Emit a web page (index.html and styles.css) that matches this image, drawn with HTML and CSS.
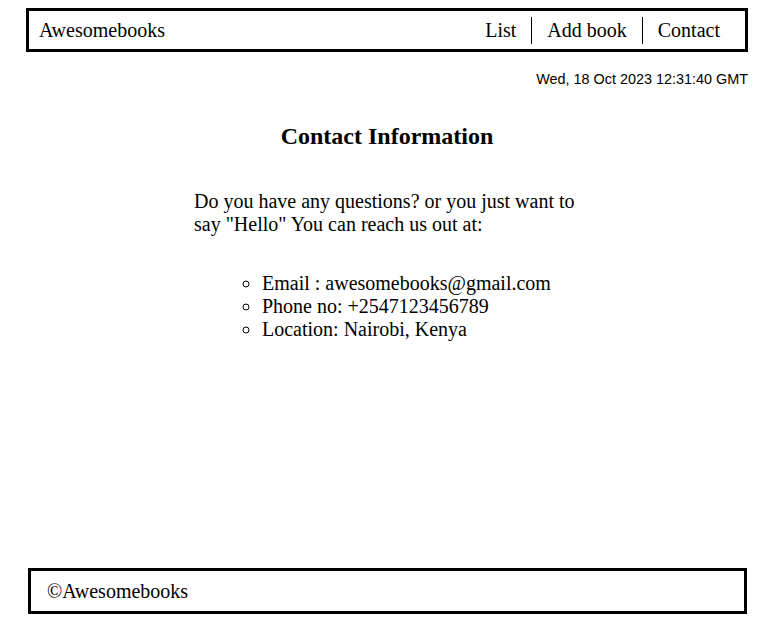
FILE: index.html
```html
<!DOCTYPE html>
<html lang="en">
<head>
<meta charset="utf-8">
<title>Awesomebooks</title>
<link rel="stylesheet" href="styles.css">
</head>
<body>
<div class="page">
  <header class="topbar">
    <span class="brand">Awesomebooks</span>
    <nav>
      <ul class="nav-list">
        <li class="nav-item">List</li>
        <li class="nav-item">Add book</li>
        <li class="nav-item">Contact</li>
      </ul>
    </nav>
  </header>
  <p class="date">Wed, 18 Oct 2023 12:31:40 GMT</p>
  <section class="contact">
    <h2 class="contact-title">Contact Information</h2>
    <div class="contact-body">
      <p class="contact-text">Do you have any questions? or you just want to say "Hello" You can reach us out at:</p>
      <ul class="contact-list">
        <li>Email : awesomebooks@gmail.com</li>
        <li>Phone no: +2547123456789</li>
        <li>Location: Nairobi, Kenya</li>
      </ul>
    </div>
  </section>
  <footer class="footer">©Awesomebooks</footer>
</div>
</body>
</html>
```

FILE: styles.css
```css
* { box-sizing: border-box; }

body {
  margin: 0;
  font-family: "Liberation Serif", "Times New Roman", serif;
  color: #000;
  background: #fff;
}

.page {
  min-height: 627px;
  display: flex;
  flex-direction: column;
  padding: 8px 19px 13px 26px;
}

.topbar {
  height: 44px;
  border: 3px solid #000;
  display: flex;
  align-items: center;
  justify-content: space-between;
  padding: 0 10px 0 10px;
  font-size: 20px;
}

.nav-list {
  list-style: none;
  margin: 0;
  padding: 0;
  display: flex;
}

.nav-item {
  padding: 0 15px;
  line-height: 27px;
  border-left: 1px solid #000;
}

.nav-item:first-child { border-left: none; }

.date {
  margin: 18px 0 0;
  text-align: right;
  font-family: "Liberation Sans", Arial, sans-serif;
  font-size: 14.4px;
  line-height: 19px;
}

.contact-title {
  margin: 33px 0 0;
  text-align: center;
  font-size: 24px;
  line-height: 28px;
}

.contact-body {
  width: 386px;
  margin: 40px 0 0 168px;
  font-size: 20px;
  line-height: 23px;
}

.contact-text { margin: 0; }

.contact-list {
  list-style: circle;
  margin: 36px 0 0;
  padding-left: 68px;
}

.footer {
  margin: auto 1px 0 2px;
  height: 46px;
  border: 3px solid #000;
  display: flex;
  align-items: center;
  padding-left: 16px;
  font-size: 20px;
}
```
